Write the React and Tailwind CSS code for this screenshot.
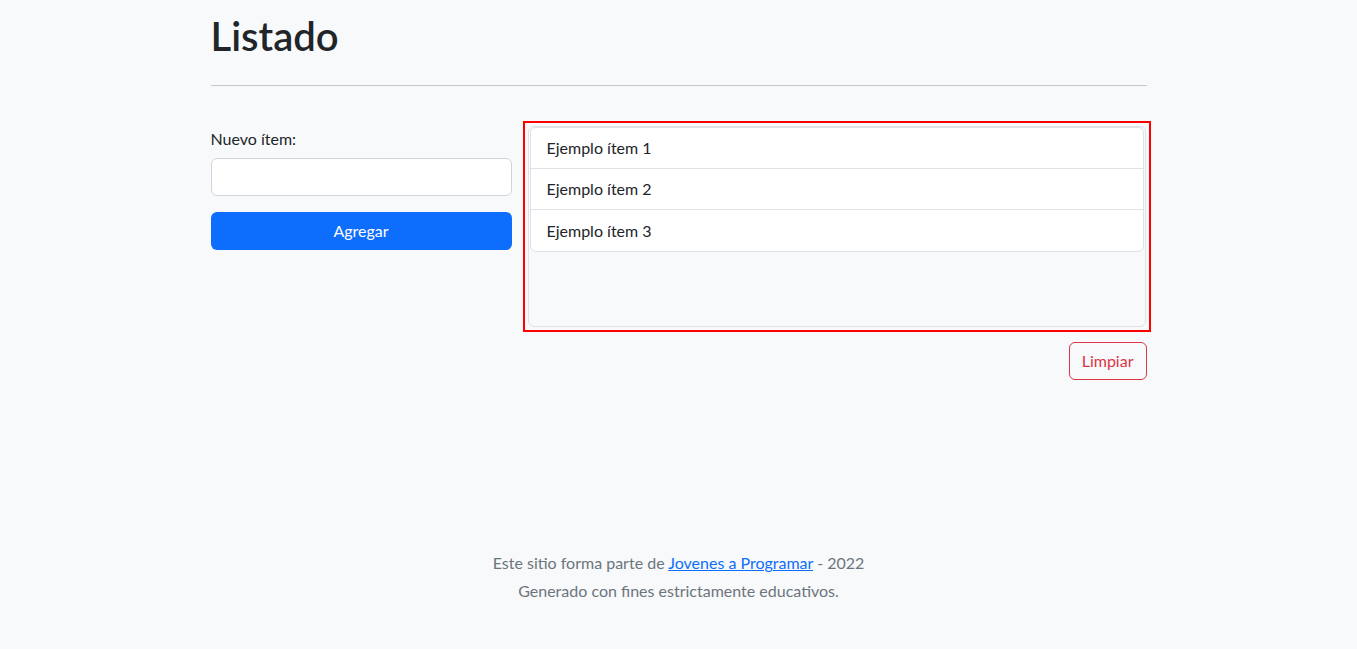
import React from 'react';

const items = ['Ejemplo ítem 1', 'Ejemplo ítem 2', 'Ejemplo ítem 3'];

const App = () => {
  return (
    <div className="min-h-screen bg-[#f8f9fa] text-[#212529] font-['Lato','Noto_Sans',sans-serif] text-base">
      <div className="w-[936px] mx-auto">
        {/* Header */}
        <h1 className="pt-[12px] text-[40px] leading-[48px] font-semibold">Listado</h1>
        <hr className="mt-[25px] border-t border-[#c6c7c8]" />

        {/* Main row */}
        <div className="flex gap-[11px] mt-[35px]">
          <div className="w-[301px] shrink-0 pt-[6px]">
            <label className="block leading-6 mb-[7px]">Nuevo ítem:</label>
            <input
              type="text"
              className="block w-full h-[38px] px-3 bg-white border border-[#ced4da] rounded-md outline-none"
            />
            <button className="mt-4 w-full h-[38px] bg-[#0d6efd] text-white rounded-md">
              Agregar
            </button>
          </div>

          <div className="flex-1 min-w-0 flex flex-col items-start">
            <div className="w-[628px] shrink-0 border-2 border-[#ff0000] p-[3px]">
              <div className="h-[201px] border border-[#dee2e6] rounded-md bg-[#f8f9fa] px-px">
                <ul className="bg-white border border-[#dee2e6] rounded-md">
                  {items.map((item, i) => (
                    <li
                      key={item}
                      className={`h-[41px] px-4 flex items-center ${i < items.length - 1 ? 'border-b border-[#dee2e6]' : ''}`}
                    >
                      {item}
                    </li>
                  ))}
                </ul>
              </div>
            </div>
            <button className="self-end mt-[10px] h-[38px] px-3 border border-[#dc3545] text-[#dc3545] rounded-md">
              Limpiar
            </button>
          </div>
        </div>

        {/* Footer */}
        <footer className="mt-[169px] text-center text-[#6c757d] leading-7">
          <p>
            Este sitio forma parte de{' '}
            <a href="#" className="text-[#0d6efd] underline">Jovenes a Programar</a> - 2022
          </p>
          <p>Generado con fines estrictamente educativos.</p>
        </footer>
      </div>
    </div>
  );
};

export default App;
